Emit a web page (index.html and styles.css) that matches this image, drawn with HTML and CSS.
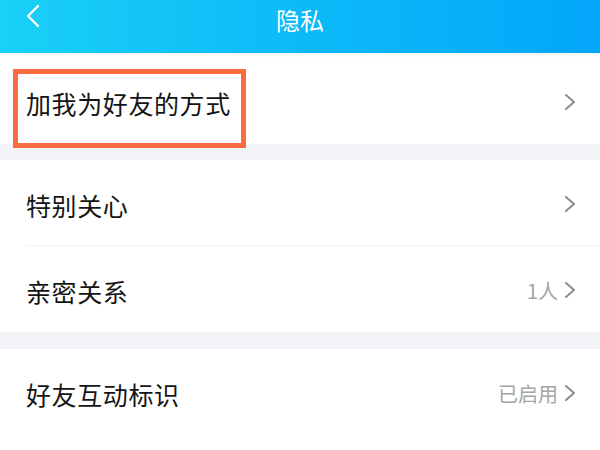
FILE: index.html
```html
<!DOCTYPE html>
<html lang="zh-CN">
<head>
<meta charset="utf-8">
<link rel="stylesheet" href="styles.css">
</head>
<body>
<div class="page">
  <header class="topbar">
    <svg class="back" viewBox="0 0 16 24" width="16" height="24"><path d="M13 2 L3 12 L13 22" fill="none" stroke="#fff" stroke-width="2.4" stroke-linecap="round" stroke-linejoin="round"/></svg>
    <div class="title">隐私</div>
  </header>
  <div class="shade"></div>
  <section class="group">
    <div class="row"><span class="label">加我为好友的方式</span><span class="right"><svg class="chev" viewBox="0 0 12 18" width="12" height="18"><path d="M2 2 L10 9 L2 16" fill="none" stroke="#8c8c8c" stroke-width="2" stroke-linecap="round" stroke-linejoin="round"/></svg></span></div>
  </section>
  <div class="gap gap1"></div>
  <section class="group">
    <div class="row divided"><span class="label">特别关心</span><span class="right"><svg class="chev" viewBox="0 0 12 18" width="12" height="18"><path d="M2 2 L10 9 L2 16" fill="none" stroke="#8c8c8c" stroke-width="2" stroke-linecap="round" stroke-linejoin="round"/></svg></span></div>
    <div class="row"><span class="label">亲密关系</span><span class="right"><span class="value">1人</span><svg class="chev" viewBox="0 0 12 18" width="12" height="18"><path d="M2 2 L10 9 L2 16" fill="none" stroke="#8c8c8c" stroke-width="2" stroke-linecap="round" stroke-linejoin="round"/></svg></span></div>
  </section>
  <div class="gap gap2"></div>
  <section class="group">
    <div class="row"><span class="label">好友互动标识</span><span class="right"><span class="value">已启用</span><svg class="chev" viewBox="0 0 12 18" width="12" height="18"><path d="M2 2 L10 9 L2 16" fill="none" stroke="#8c8c8c" stroke-width="2" stroke-linecap="round" stroke-linejoin="round"/></svg></span></div>
  </section>
  <div class="highlight"></div>
</div>
</body>
</html>
```
FILE: styles.css
```css
html, body {
  margin: 0;
  padding: 0;
  background: #ffffff;
}
.page {
  position: relative;
  width: 600px;
  height: 450px;
  overflow: hidden;
  font-family: "Noto Sans CJK SC", "Noto Sans", sans-serif;
  background: #ffffff;
}
.topbar {
  position: relative;
  height: 53px;
  background: linear-gradient(90deg, #1ad0f6 0%, #0cbaf8 50%, #03a6f9 100%);
  display: flex;
  align-items: center;
  justify-content: center;
}
.back {
  position: absolute;
  left: 25px;
  top: 4px;
}
.title {
  color: #ffffff;
  font-size: 24px;
  line-height: 1;
  margin-top: -14px;
}
.shade {
  height: 5px;
  background: linear-gradient(#f2f6f9, #ffffff);
}
.group {
  background: #ffffff;
}
.row {
  height: 86px;
  display: flex;
  align-items: center;
  justify-content: space-between;
  padding: 0 24px 0 26px;
  box-sizing: border-box;
  position: relative;
}
.row.divided::after {
  content: "";
  position: absolute;
  left: 26px;
  right: 0;
  bottom: 0;
  height: 1px;
  background: #f1f2f4;
}
.label {
  font-size: 25px;
  color: #141414;
  letter-spacing: 0.6px;
  padding-top: 4px;
}
.right {
  display: flex;
  align-items: center;
  gap: 6px;
  padding-top: 2px;
}
.value {
  font-size: 20px;
  color: #a5a5a5;
}
.chev {
  display: block;
}
.gap {
  background: #f3f4f8;
}
.gap1 {
  height: 16px;
}
.gap2 {
  height: 17px;
}
.highlight {
  position: absolute;
  left: 13px;
  top: 69px;
  width: 233px;
  height: 79px;
  border: 5px solid #fe6b3e;
  box-sizing: border-box;
}
```
